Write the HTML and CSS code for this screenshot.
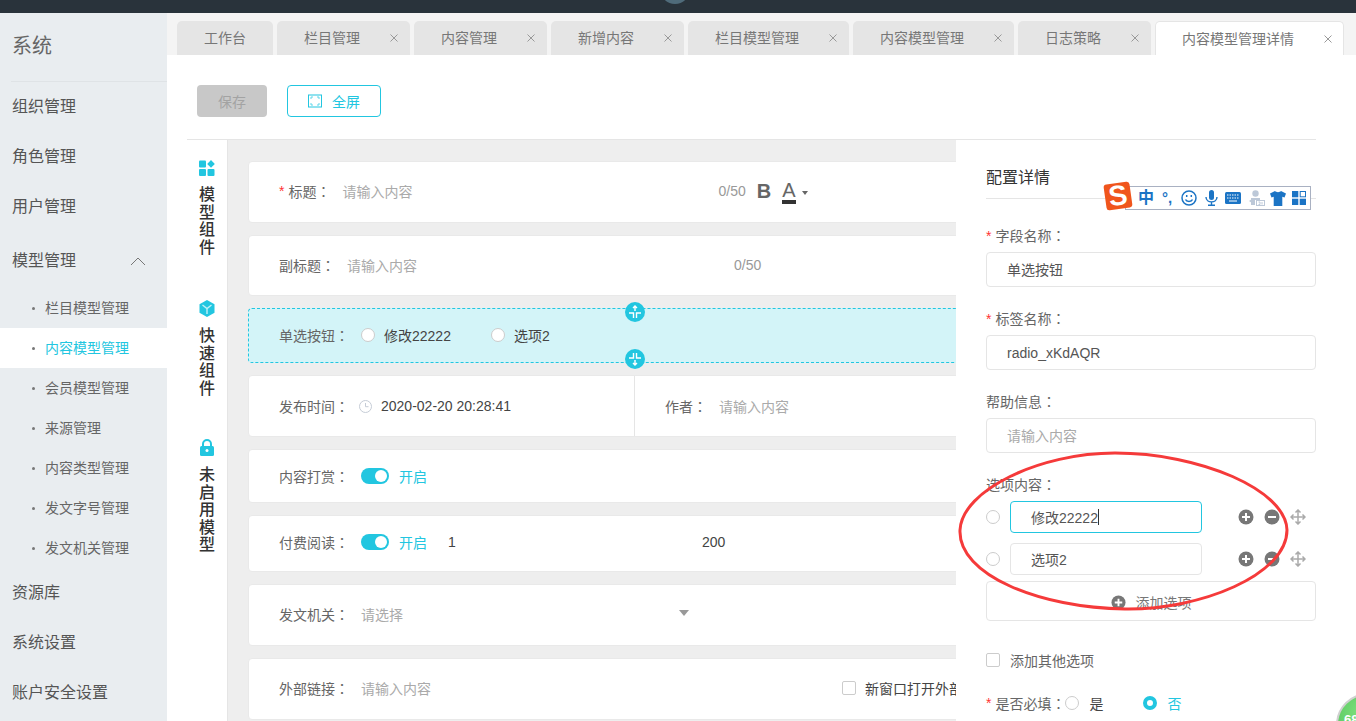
FILE: index.html
```html
<!DOCTYPE html>
<html lang="zh-CN">
<head>
<meta charset="utf-8">
<title>内容模型管理详情</title>
<link rel="stylesheet" href="styles.css">
</head>
<body>
<div class="app">
  <header class="topbar"><span class="avatar"></span></header>
  <aside class="sidebar">
    <div class="brand">系统</div>
    <nav>
      <div class="nav-item">组织管理</div>
      <div class="nav-item">角色管理</div>
      <div class="nav-item">用户管理</div>
      <div class="nav-item nav-open">模型管理
        <svg class="chev" width="16" height="9" viewBox="0 0 16 9"><path d="M1 8l7-7 7 7" fill="none" stroke="#777" stroke-width="1"/></svg>
      </div>
      <div class="sub-item">栏目模型管理</div>
      <div class="sub-item sub-active">内容模型管理</div>
      <div class="sub-item">会员模型管理</div>
      <div class="sub-item">来源管理</div>
      <div class="sub-item">内容类型管理</div>
      <div class="sub-item">发文字号管理</div>
      <div class="sub-item">发文机关管理</div>
      <div class="nav-item">资源库</div>
      <div class="nav-item">系统设置</div>
      <div class="nav-item">账户安全设置</div>
    </nav>
  </aside>
  <main class="main">
    <div class="tabs">
      <div class="tab tab-plain">工作台</div>
      <div class="tab">栏目管理<svg class="tab-x" width="8" height="8" viewBox="0 0 8 8"><path d="M.5.5l7 7M7.5.5l-7 7" stroke="#999" fill="none"/></svg></div>
      <div class="tab">内容管理<svg class="tab-x" width="8" height="8" viewBox="0 0 8 8"><path d="M.5.5l7 7M7.5.5l-7 7" stroke="#999" fill="none"/></svg></div>
      <div class="tab">新增内容<svg class="tab-x" width="8" height="8" viewBox="0 0 8 8"><path d="M.5.5l7 7M7.5.5l-7 7" stroke="#999" fill="none"/></svg></div>
      <div class="tab">栏目模型管理<svg class="tab-x" width="8" height="8" viewBox="0 0 8 8"><path d="M.5.5l7 7M7.5.5l-7 7" stroke="#999" fill="none"/></svg></div>
      <div class="tab">内容模型管理<svg class="tab-x" width="8" height="8" viewBox="0 0 8 8"><path d="M.5.5l7 7M7.5.5l-7 7" stroke="#999" fill="none"/></svg></div>
      <div class="tab">日志策略<svg class="tab-x" width="8" height="8" viewBox="0 0 8 8"><path d="M.5.5l7 7M7.5.5l-7 7" stroke="#999" fill="none"/></svg></div>
      <div class="tab tab-active">内容模型管理详情<svg class="tab-x" width="8" height="8" viewBox="0 0 8 8"><path d="M.5.5l7 7M7.5.5l-7 7" stroke="#999" fill="none"/></svg></div>
    </div>
    <div class="content">
      <div class="toolbar">
        <button class="btn btn-save">保存</button>
        <button class="btn btn-full">
          <svg width="14" height="14" viewBox="0 0 14 14" fill="none"><rect x=".5" y="1" width="13" height="12" stroke="#22c6e0"/><path d="M3 5V3h2M9 3h2v2M11 9v2H9M5 11H3V9" stroke="#5fd6ea"/></svg>
          全屏
        </button>
      </div>
      <div class="workspace">
        <div class="rail">
          <div class="rail-group rail-first">
            <svg width="16" height="16" viewBox="0 0 16 16" fill="#22c6e0"><rect x="0" y="0.5" width="7" height="7" rx="1"/><rect x="0" y="9" width="7" height="7" rx="1"/><rect x="8.500" y="9" width="7" height="7" rx="1"/><path d="M12 0l3.800 3.900L12 7.800 8.200 3.900z"/></svg>
            <div class="rail-text">模型组件</div>
          </div>
          <div class="rail-group">
            <svg width="16" height="17" viewBox="0 0 16 17"><path d="M8 0l7.500 4.200v8.600L8 17 .5 12.800V4.200z" fill="#22c6e0"/><path d="M3.500 5L8 8.500 12.500 5M8 8.500V14" stroke="#bff0f7" stroke-width="1.400" fill="none"/></svg>
            <div class="rail-text">快速组件</div>
          </div>
          <div class="rail-group">
            <svg width="16" height="17" viewBox="0 0 16 17"><path d="M4 8V5a4 4 0 018 0v3" fill="none" stroke="#22c6e0" stroke-width="2"/><rect x="1" y="7" width="14" height="10" rx="1.500" fill="#22c6e0"/><circle cx="8" cy="11.500" r="1.500" fill="#fff"/></svg>
            <div class="rail-text">未启用模型</div>
          </div>
        </div>
        <div class="canvas">
          <div class="card h62">
            <span class="req">*</span><span class="label w54">标题<span class="cl" lang="zh-TW">：</span></span>
            <span class="ph w376">请输入内容</span>
            <span class="count">0/50</span>
            <span class="bold-b">B</span>
            <span class="color-a">A</span>
            <span class="caret-sm"></span>
          </div>
          <div class="card h61">
            <span class="label w68">副标题<span class="cl" lang="zh-TW">：</span></span>
            <span class="ph w387">请输入内容</span>
            <span class="count">0/50</span>
          </div>
          <div class="card h55 card-sel">
            <span class="label w82">单选按钮<span class="cl" lang="zh-TW">：</span></span>
            <span class="radio"></span><span class="opt w107">修改22222</span>
            <span class="radio"></span><span class="opt">选项2</span>
            <span class="handle handle-top"><svg width="20" height="20" viewBox="0 0 20 20" fill="none" stroke="#fff" stroke-width="1.400"><circle cx="10" cy="10" r="10" fill="#22c6e0" stroke="none"/><path d="M10 9V4M8 6l2-2 2 2M4 11h4.500v5M16 11h-4.500v5"/></svg></span>
            <span class="handle handle-bottom"><svg width="20" height="20" viewBox="0 0 20 20" fill="none" stroke="#fff" stroke-width="1.400"><circle cx="10" cy="10" r="10" fill="#22c6e0" stroke="none"/><path d="M10 11v5M8 14l2 2 2-2M4 9h4.500V4M16 9h-4.500V4"/></svg></span>
          </div>
          <div class="card h62 card-split">
            <div class="cell-left">
              <span class="label w80">发布时间<span class="cl" lang="zh-TW">：</span></span>
              <svg class="clock" width="13" height="13" viewBox="0 0 13 13" fill="none" stroke="#c5ccd6"><circle cx="6.500" cy="6.500" r="6"/><path d="M6.500 3v3.700h3"/></svg>
              <span class="val">2020-02-20 20:28:41</span>
            </div>
            <div class="cell-right">
              <span class="label w54">作者<span class="cl" lang="zh-TW">：</span></span>
              <span class="ph">请输入内容</span>
            </div>
          </div>
          <div class="card h54">
            <span class="label w82">内容打赏<span class="cl" lang="zh-TW">：</span></span>
            <span class="switch"><i class="knob"></i></span><span class="on w49">开启</span>
          </div>
          <div class="card h57">
            <span class="label w82">付费阅读<span class="cl" lang="zh-TW">：</span></span>
            <span class="switch"><i class="knob"></i></span><span class="on w49">开启</span>
            <span class="val w254">1</span>
            <span class="val">200</span>
          </div>
          <div class="card h62">
            <span class="label w82">发文机关<span class="cl" lang="zh-TW">：</span></span>
            <span class="ph w318">请选择</span>
            <span class="caret-lg"></span>
          </div>
          <div class="card h62">
            <span class="label w82">外部链接<span class="cl" lang="zh-TW">：</span></span>
            <span class="ph w481">请输入内容</span>
            <span class="check"></span>
            <span class="val">新窗口打开外部链接</span>
          </div>
        </div>
        <section class="panel">
          <div class="panel-title">配置详情</div>
          <div class="f-label f-first"><span class="req">*</span>字段名称<span class="cl" lang="zh-TW">：</span></div>
          <div class="input">单选按钮</div>
          <div class="f-label"><span class="req">*</span>标签名称<span class="cl" lang="zh-TW">：</span></div>
          <div class="input">radio_xKdAQR</div>
          <div class="f-label">帮助信息<span class="cl" lang="zh-TW">：</span></div>
          <div class="input input-ph">请输入内容</div>
          <div class="f-label">选项内容<span class="cl" lang="zh-TW">：</span></div>
          <div class="opt-row">
            <span class="radio"></span>
            <div class="opt-input opt-focus">修改22222<i class="cursor"></i></div>
            <svg class="ic-first" width="16" height="16" viewBox="0 0 16 16"><circle cx="8" cy="8" r="7.500" fill="#777"/><path d="M4 8h8M8 4v8" stroke="#fff" stroke-width="2"/></svg>
            <svg class="ic" width="16" height="16" viewBox="0 0 16 16"><circle cx="8" cy="8" r="7.500" fill="#777"/><path d="M4 8h8" stroke="#fff" stroke-width="2"/></svg>
            <svg class="ic" width="16" height="16" viewBox="0 0 16 16" fill="none" stroke="#aaa" stroke-width="1.500"><path d="M8 1v14M1 8h14M5.500 3.500L8 1l2.500 2.500M5.500 12.500L8 15l2.500-2.500M3.500 5.500L1 8l2.500 2.500M12.500 5.500L15 8l-2.500 2.500"/></svg>
          </div>
          <div class="opt-row">
            <span class="radio"></span>
            <div class="opt-input">选项2</div>
            <svg class="ic-first" width="16" height="16" viewBox="0 0 16 16"><circle cx="8" cy="8" r="7.500" fill="#777"/><path d="M4 8h8M8 4v8" stroke="#fff" stroke-width="2"/></svg>
            <svg class="ic" width="16" height="16" viewBox="0 0 16 16"><circle cx="8" cy="8" r="7.500" fill="#777"/><path d="M4 8h8" stroke="#fff" stroke-width="2"/></svg>
            <svg class="ic" width="16" height="16" viewBox="0 0 16 16" fill="none" stroke="#aaa" stroke-width="1.500"><path d="M8 1v14M1 8h14M5.500 3.500L8 1l2.500 2.500M5.500 12.500L8 15l2.500-2.500M3.500 5.500L1 8l2.500 2.500M12.500 5.500L15 8l-2.500 2.500"/></svg>
          </div>
          <div class="add-box">
            <svg width="15" height="15" viewBox="0 0 16 16"><circle cx="8" cy="8" r="7.500" fill="#777"/><path d="M4 8h8M8 4v8" stroke="#fff" stroke-width="2"/></svg>
            添加选项
          </div>
          <div class="check-row"><span class="check"></span>添加其他选项</div>
          <div class="must-row">
            <span class="req">*</span><span class="must-label">是否必填<span class="cl" lang="zh-TW">：</span></span>
            <span class="radio"></span><span class="opt w54">是</span>
            <span class="radio radio-on"></span><span class="on">否</span>
          </div>
        </section>
      </div>
    </div>
  </main>
</div>

<svg class="scribble" width="406" height="281" viewBox="0 0 406 281" fill="none"><path d="M10 90C12 50 90 13 165 13C250 13 336 50 337 90C337 135 250 170 175 169C90 168 8 135 10 90Z" stroke="#f53a3a" stroke-width="3"/></svg>

<div class="sogou">
  <span class="sg-logo"><span class="sg-s">S</span></span>
  <div class="sg-bar">
    <span class="sg-zh">中</span>
    <span class="sg-punc">°,</span>
    <svg class="sg-smile" width="16" height="16" viewBox="0 0 16 16" fill="none" stroke="#1b74c5" stroke-width="1.500"><circle cx="8" cy="8" r="7"/><path d="M4.500 9.500c1 2.600 6 2.600 7 0"/><path d="M5.700 5v2M10.300 5v2"/></svg>
    <svg class="sg-mic" width="13" height="16" viewBox="0 0 13 16" fill="#1b74c5"><rect x="4" y="0" width="5" height="10" rx="2.500"/><path d="M1 7c0 6.500 11 6.500 11 0M6.500 12v3" fill="none" stroke="#1b74c5" stroke-width="1.400"/><rect x="3" y="14.500" width="7" height="1.500"/></svg>
    <svg class="sg-kb" width="16" height="12" viewBox="0 0 16 12"><rect width="16" height="12" rx="1.500" fill="#1b74c5"/><path d="M2 3h12M2 6h12" stroke="#fff" stroke-dasharray="1.500 1"/><path d="M4 9h8" stroke="#fff"/></svg>
    <svg class="sg-user" width="16" height="16" viewBox="0 0 16 16" fill="#bcc8d8"><circle cx="6.500" cy="3.500" r="3.200"/><path d="M2 8h9v2H6v5H2z"/><path d="M0 11l3-2v4z"/><rect x="7.500" y="10.500" width="8" height="5" fill="#fff" stroke="#bcc8d8"/><path d="M9.500 12h1.500v2.500H9.500M13 12v2.500" fill="none" stroke="#bcc8d8"/></svg>
    <svg class="sg-shirt" width="16" height="15" viewBox="0 0 16 15" fill="#1b74c5"><path d="M5 0c1 1.500 5 1.500 6 0l5 2.500-1.500 4-2.200-.8V15H3.700V5.700l-2.200.8L0 2.500z"/></svg>
    <svg class="sg-grid" width="14" height="14" viewBox="0 0 14 14" fill="#1b74c5"><rect width="6.300" height="6.300"/><rect x="8.200" y=".5" width="5.300" height="5.300" fill="#fff" stroke="#1b74c5"/><rect y="7.700" width="6.300" height="6.300"/><rect x="7.700" y="7.700" width="6.300" height="6.300"/></svg>
  </div>
</div>

<div class="ball-clip"><div class="ball"><span class="ball-num">68</span></div></div>
</body>
</html>
```
FILE: styles.css
```css
* { box-sizing: border-box; }
html, body { margin: 0; height: 721px; overflow: hidden; }
body {
  position: relative;
  width: 1356px;
  font-family: "Liberation Sans", "Noto Sans CJK SC", sans-serif;
  font-size: 14px;
  color: #444;
  background: #fff;
}
.cl { font-family: "Noto Sans CJK TC", sans-serif; line-height: 1; }
.app {
  display: grid;
  grid-template-columns: 167px 1fr;
  grid-template-rows: 13px 708px;
  height: 721px;
}
.topbar {
  grid-column: 1 / 3;
  position: relative;
  overflow: hidden;
  background: #29333b;
}
.avatar {
  position: absolute;
  left: 660px;
  top: -26px;
  width: 30px;
  height: 30px;
  border-radius: 50%;
  background: #4f6b7a;
}

/* sidebar */
.sidebar { background: #e9edf0; overflow: hidden; }
.brand {
  height: 69px;
  margin-left: 11px;
  padding: 14px 0 0 1px;
  font-size: 20px;
  line-height: 38px;
  color: #666;
  border-bottom: 1px solid #dfe3e6;
}
.nav-item {
  height: 50px;
  padding-left: 12px;
  font-size: 16px;
  line-height: 50px;
  color: #555;
}
.nav-open {
  display: flex;
  align-items: center;
  justify-content: space-between;
  height: 56px;
  line-height: 55px;
  padding: 1px 21px 0 12px;
}
.chev { margin-top: 2px; }
.sub-item {
  position: relative;
  height: 40px;
  padding-left: 45px;
  font-size: 14px;
  line-height: 40px;
  color: #666;
}
.sub-item::before {
  content: "";
  position: absolute;
  left: 32px;
  top: 19px;
  width: 3px;
  height: 3px;
  border-radius: 50%;
  background: #777;
}
.sub-active { background: #fff; color: #22c6e0; }

/* tabs */
.main { display: flex; flex-direction: column; min-width: 0; }
.tabs {
  display: flex;
  gap: 4px;
  height: 42px;
  padding: 8px 0 0 10px;
  background: #f4f4f4;
}
.tab {
  display: flex;
  align-items: center;
  height: 34px;
  padding: 0 12px 0 27px;
  background: #e5e5e5;
  border-radius: 5px 5px 0 0;
  color: #777;
  line-height: 34px;
}
.tab-plain { padding: 0 27px; }
.tab-x { margin-left: 30px; }
.tab-active {
  background: #fff;
  border: 1px solid #e5e5e5;
  border-bottom: 0;
  padding-left: 26px;
  padding-right: 11px;
}

/* toolbar */
.content { flex: 1; min-height: 0; background: #fff; overflow: hidden; }
.toolbar {
  display: flex;
  gap: 20px;
  height: 84px;
  padding: 30px 0 0 30px;
}
.btn {
  display: flex;
  align-items: center;
  justify-content: center;
  height: 32px;
  border-radius: 4px;
  font: inherit;
  padding: 0;
}
.btn-save {
  width: 70px;
  border: 0;
  background: #c8c8c8;
  color: #a3a3a3;
}
.btn-full {
  width: 94px;
  gap: 10px;
  border: 1px solid #22c6e0;
  background: #fff;
  color: #22c6e0;
}

/* workspace */
.workspace {
  display: flex;
  height: 582px;
  margin: 0 40px 0 20px;
  border-top: 1px solid #e5e5e5;
}
.rail {
  flex: none;
  width: 41px;
  padding: 20px 0 0 12px;
  border-right: 1px solid #e5e5e5;
}
.rail-group { height: 139px; }
.rail-first { height: 140px; }
.rail-group svg { display: block; }
.rail-first svg { margin-bottom: 2px; }
.rail-text {
  width: 16px;
  margin-top: 10px;
  font-size: 16px;
  line-height: 17.5px;
  font-weight: 500;
  color: #333;
  word-break: break-all;
}
.canvas {
  flex: 1;
  min-width: 0;
  display: flex;
  flex-direction: column;
  gap: 12px;
  padding: 21px 0 0 20px;
  background: #eee;
  overflow: hidden;
}
.card {
  position: relative;
  display: flex;
  flex: none;
  align-items: center;
  width: 800px;
  padding-left: 30px;
  padding-bottom: 2px;
  background: #fff;
  border: 1px solid #e9e9e9;
  border-radius: 4px;
  white-space: nowrap;
}
.h62 { height: 62px; }
.h61 { height: 61px; }
.h57 { height: 57px; padding-bottom: 3px; }
.h55 { height: 55px; }
.h54 { height: 54px; padding-bottom: 0; }
.label { flex: none; color: #666; }
.req { color: #f33; margin-right: 4px; }
.ph { flex: none; color: #aaa; }
.val { flex: none; color: #444; }
.opt { flex: none; color: #444; }
.on { flex: none; color: #22c6e0; }
.w54 { width: 54px; }
.w68 { width: 68px; }
.w80 { width: 80px; }
.w82 { width: 82px; }
.w107 { width: 107px; }
.w376 { width: 376px; }
.w387 { width: 387px; }
.w318 { width: 318px; }
.w481 { width: 481px; }
.w49 { width: 49px; }
.w254 { width: 254px; }
.count { flex: none; color: #999; }
.bold-b {
  margin-left: 11px;
  font-size: 20px;
  font-weight: 700;
  color: #666;
}
.color-a {
  margin-left: 11px;
  padding-top: 1px;
  font-size: 20px;
  line-height: 20px;
  color: #666;
  border-bottom: 4px solid #333;
}
.caret-sm {
  margin: 4px 0 0 6px;
  border: 3px solid transparent;
  border-top: 4px solid #666;
  border-bottom: 0;
}
.caret-lg {
  flex: none;
  margin-top: -2px;
  border: 5px solid transparent;
  border-top: 6px solid #999;
  border-bottom: 0;
}
.radio {
  flex: none;
  width: 14px;
  height: 14px;
  margin-right: 9px;
  background: #fff;
  border: 1px solid #ccc;
  border-radius: 50%;
}
.radio-on { border: 4.5px solid #22c6e0; margin-right: 10px; }
.card-sel {
  background: #d3f4f8;
  border: 1px dashed #22c6e0;
}
.handle {
  position: absolute;
  left: 376px;
  width: 20px;
  height: 20px;
}
.handle svg { display: block; }
.handle-top { top: -7px; }
.handle-bottom { bottom: -7px; }
.card-split { padding-left: 0; padding-bottom: 0; }
.cell-left {
  display: flex;
  align-items: center;
  width: 386px;
  height: 100%;
  padding-left: 30px;
  border-right: 1px solid #e5e5e5;
}
.clock { flex: none; margin-right: 9px; }
.cell-right { display: flex; align-items: center; padding-left: 30px; }
.switch {
  flex: none;
  display: flex;
  justify-content: flex-end;
  align-items: center;
  width: 28px;
  height: 16px;
  margin-right: 10px;
  padding-right: 2px;
  background: #22c6e0;
  border-radius: 8px;
}
.knob { width: 12px; height: 12px; border-radius: 50%; background: #fff; }
.check {
  flex: none;
  width: 14px;
  height: 14px;
  margin-right: 9px;
  background: #fff;
  border: 1px solid #ccc;
  border-radius: 2px;
}

/* panel */
.panel {
  flex: none;
  width: 400px;
  margin-right: -40px;
  padding: 25px 40px 0 30px;
  background: #fff;
  position: relative;
}
.panel-title {
  height: 34px;
  font-size: 16px;
  line-height: 26px;
  color: #333;
  border-bottom: 1px solid #e5e5e5;
}
.f-label {
  height: 20px;
  margin: 22px 0 6px;
  line-height: 20px;
  color: #666;
}
.f-first { margin-top: 27px; }
.input {
  height: 35px;
  padding-left: 20px;
  line-height: 35px;
  color: #555;
  border: 1px solid #e5e5e5;
  border-radius: 4px;
}
.input-ph { color: #aaa; }
.opt-row {
  display: flex;
  align-items: center;
  height: 32px;
  margin-bottom: 10px;
}
.opt-row .radio { margin-right: 10px; }
.opt-input {
  display: flex;
  align-items: center;
  width: 192px;
  height: 32px;
  padding-left: 20px;
  color: #555;
  border: 1px solid #e5e5e5;
  border-radius: 4px;
}
.opt-focus { border-color: #22c6e0; }
.cursor { width: 1px; height: 16px; background: #333; }
.ic-first { flex: none; margin-left: 36px; }
.ic { flex: none; margin-left: 10px; }
.add-box {
  display: flex;
  align-items: center;
  justify-content: center;
  gap: 10px;
  height: 40px;
  margin-top: -4px;
  padding-top: 2px;
  color: #777;
  border: 1px solid #e5e5e5;
  border-radius: 4px;
}
.check-row {
  display: flex;
  align-items: center;
  height: 20px;
  margin-top: 29px;
  color: #666;
}
.check-row .check { margin-right: 10px; }
.must-row {
  display: flex;
  align-items: center;
  height: 20px;
  margin-top: 23px;
  color: #666;
}
.must-row .radio { margin-right: 10px; }
.must-label { width: 70px; flex: none; }

/* overlays */
.scribble {
  position: absolute;
  left: 950px;
  top: 440px;
  pointer-events: none;
}
.sogou {
  position: absolute;
  left: 1105px;
  top: 183px;
  display: flex;
  align-items: center;
  width: 206px;
  height: 27px;
}
.sg-logo {
  position: absolute;
  left: 0;
  top: 0;
  z-index: 1;
  display: flex;
  align-items: center;
  justify-content: center;
  width: 26px;
  height: 26px;
  background: #f0551c;
  border-radius: 3px;
  transform: rotate(-8deg);
}
.sg-s {
  font-size: 28px;
  font-weight: 700;
  line-height: 26px;
  color: #fff;
}
.sg-bar {
  display: flex;
  align-items: center;
  width: 186px;
  height: 24px;
  margin: 3px 0 0 20px;
  padding-left: 12px;
  background: #fff;
  border: 1px solid #a9b1c2;
}
.sg-bar svg { flex: none; }
.sg-zh {
  flex: none;
  width: 16px;
  font-size: 16px;
  font-weight: 700;
  line-height: 20px;
  color: #1b74c5;
}
.sg-punc {
  flex: none;
  width: 10px;
  margin-left: 8px;
  font-size: 15px;
  font-weight: 700;
  line-height: 16px;
  color: #1b74c5;
}
.sg-smile { margin-left: 9px; }
.sg-mic { margin-left: 8px; }
.sg-kb { margin-left: 7px; }
.sg-user { margin-left: 8px; }
.sg-shirt { margin-left: 5px; }
.sg-grid { margin-left: 6px; }
.ball-clip {
  position: absolute;
  left: 1336px;
  top: 693px;
  width: 20px;
  height: 28px;
  overflow: hidden;
}
.ball {
  width: 64px;
  height: 64px;
  padding: 18px 0 0 6px;
  border: 2px solid #d0d0d0;
  border-radius: 50%;
  background: radial-gradient(circle at 40% 30%, #7fe07f, #3fb84a);
}
.ball-num {
  display: block;
  font-size: 13px;
  font-weight: 700;
  line-height: 14px;
  color: #fff;
}
```
